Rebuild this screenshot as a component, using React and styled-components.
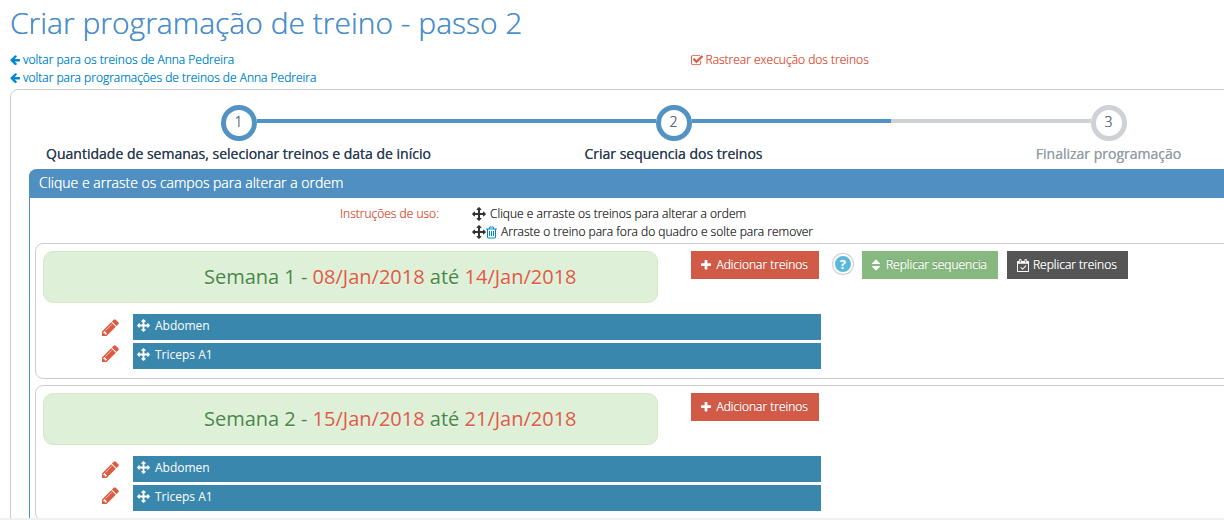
import styled, { createGlobalStyle } from "styled-components";

const GlobalStyle = createGlobalStyle`
  * {
    box-sizing: border-box;
  }
  body {
    margin: 0;
    background: #fff;
    color: #333;
    font-family: "Open Sans", "Liberation Sans", sans-serif;
    font-size: 12px;
    font-weight: 300;
    line-height: 18px;
    text-shadow: 0 0 0 currentColor;
  }
`

const Shell = styled.div`
  display: flex;
  flex-direction: column;
  height: 100vh;
`
const Page = styled.main`
  flex: 1;
  min-height: 0;
  overflow: hidden;
  padding: 0 10px;
`
const BottomStrip = styled.div`
  height: 2px;
  background: #f0f0f0;
`
const H1 = styled.h1`
  margin: 0;
  padding: 2px 0 7px;
  font-size: 30px;
  line-height: 42px;
  font-weight: 300;
  color: #4b8fcb;
  text-shadow: 0 0 0 currentColor;
`
const Columns = styled.div`
  display: grid;
  grid-template-columns: 1fr 1fr;
  column-gap: 33px;
`
// the form is wider than the window, its right end is cut
const Wide = styled.div`
  margin-right: -124px;
`
const LinkRow = styled(Columns)`
  padding: 0 0 2px;
  align-items: start;
`
const LinkList = styled.nav`
  display: flex;
  flex-direction: column;
  align-items: flex-start;
`
const Link = styled.a`
  display: inline-flex;
  align-items: center;
  gap: 3px;
  color: ${(props) => props.$danger ? "#dd5a43" : "#0088cc"};
  text-decoration: none;
  text-shadow: 0 0 0 currentColor;
`
const Frame = styled.section`
  border: 1px solid #ccc;
  border-radius: 8px;
  padding: 15px 0 20px;
`
const Steps = styled.ol`
  display: grid;
  grid-template-columns: repeat(3, 1fr);
  list-style: none;
  margin: 0;
  padding: 0 11px 6px 10px;
`
const Step = styled.li`
  display: flex;
  flex-direction: column;
  align-items: center;
  gap: 4px;
`
const Track = styled.div`
  display: grid;
  grid-template-columns: 1fr 36px 1fr;
  align-items: center;
  width: 100%;
`
const Line = styled.span`
  height: 4px;
  margin-bottom: 4px;
  background: ${(props) => props.$hidden ? "transparent" : props.$active ? "#5293c4" : "#ced1d6"};
`
const Circle = styled.span`
  height: 36px;
  border: 5px solid ${(props) => props.$active ? "#5293c4" : "#ced1d6"};
  border-radius: 50%;
  text-align: center;
  font-size: 14px;
  line-height: 24px;
  color: #546474;
`
const StepTitle = styled.span`
  font-size: 14px;
  font-weight: 400;
  color: ${(props) => props.$active ? "#2b3d53" : "#949ea7"};
  text-shadow: 0 0 0 currentColor;
`
const Panel = styled.div`
  margin: 0 18px;
  border: 1px solid #4f8fc1;
  border-top: 0;
  border-radius: 8px 8px 0 0;
`
const PanelTitle = styled.h2`
  margin: 0 -1px;
  padding: 0 10px 1px;
  border-radius: 8px 8px 0 0;
  background: #4f8fc1;
  color: #fff;
  font-size: 14px;
  line-height: 28px;
  font-weight: 300;
  text-shadow: 0 0 0 currentColor;
`
const Help = styled.div`
  display: grid;
  grid-template-columns: 409px 1fr;
  column-gap: 33px;
  padding: 7px 0 2px;
`
const HelpLabel = styled.span`
  color: #dd5a43;
  text-align: right;
  text-shadow: 0 0 0 currentColor;
`
const HelpLine = styled.div`
  display: flex;
  align-items: center;
`
const HelpText = styled.span`
  margin-left: 4px;
`
const Weeks = styled.div`
  display: flex;
  flex-direction: column;
  gap: 6px;
  padding: 0 5px;
`
const WeekBox = styled.section`
  border: 1px solid #ccc;
  border-radius: 8px;
  padding: 7px 7px 9px;
`
const WeekTitle = styled.h3`
  margin: 0;
  padding: 0 0 0 80px;
  border: 1px solid #d6e9c6;
  border-radius: 10px;
  background: #dff0d8;
  color: #468847;
  font-size: 20px;
  line-height: 50px;
  font-weight: 400;
  text-align: center;
  text-shadow: 0 1px 0 rgba(255, 255, 255, 0.5);
`
const DateText = styled.span`
  color: #dd5a43;
`
const Actions = styled.div`
  display: flex;
  align-items: flex-start;
`
const Button = styled.button`
  display: flex;
  align-items: center;
  gap: ${(props) => props.$gap || 4}px;
  height: 28px;
  margin: 0 9px 0 0;
  padding: 0 11px 0 10px;
  border: 0;
  background: ${(props) => props.$color};
  color: #fff;
  font: inherit;
  text-shadow: 0 0 0 #fff, 0 -1px 0 rgba(0, 0, 0, 0.25);
`
const HelpButton = styled.button`
  width: 20px;
  height: 20px;
  margin: 3px 9px 0 5px;
  padding: 0;
  border: 2px solid #fff;
  border-radius: 50%;
  background: #5bb8dc;
  box-shadow: 0 0 1px 1px #ccc;
  color: #fff;
  font: inherit;
  font-size: 13px;
  font-weight: 700;
  line-height: 16px;
`
const TaskArea = styled.div`
  display: flex;
  align-items: flex-start;
  margin-top: 11px;
`
const EditList = styled.div`
  display: flex;
  flex-direction: column;
  width: 90px;
`
const TaskList = styled.ul`
  display: flex;
  flex-direction: column;
  flex: 0 0 54.5%;
  gap: 3px;
  list-style: none;
  margin: 0;
  padding: 0;
`
const EditButton = styled.button`
  display: flex;
  justify-content: flex-end;
  align-items: center;
  height: 26px;
  padding: 0 14px 0 0;
  border: 0;
  background: none;
  color: #dd5a43;
`
const Task = styled.li`
  display: flex;
  gap: 5px;
  height: 26px;
  padding: 3px 4px;
  background: #3a87ad;
  color: #fff;
  font-weight: 400;
  text-shadow: none;
`
const Svg = styled.svg`
  display: block;
  flex: none;
  fill: currentColor;
  color: ${(props) => props.$color || "inherit"};
`
const TaskIcon = styled(Svg)`
  margin-top: 2px;
`

const icons = {
  arrowLeft: "M1664 896v128q0 53-32.5 90.5t-84.5 37.5h-704l293 294q38 36 38 90t-38 90l-75 76q-37 37-90 37-52 0-91-37l-651-652q-37-37-37-90 0-52 37-91l651-650q38-38 91-38 52 0 90 38l75 74q38 38 38 91t-38 91l-293 293h704q52 0 84.5 37.5t32.5 90.5z",
  check: "M1472 930v318q0 119-84.5 203.5t-203.5 84.5h-832q-119 0-203.5-84.5t-84.5-203.5v-832q0-119 84.5-203.5t203.5-84.5h832q63 0 117 25 15 7 18 23 3 17-9 29l-49 49q-10 10-23 10-3 0-9-2-23-6-45-6h-832q-66 0-113 47t-47 113v832q0 66 47 113t113 47h832q66 0 113-47t47-113v-254q0-13 9-22l64-64q10-10 23-10 6 0 12 3 20 8 20 29zm231-489l-814 814q-24 24-57 24t-57-24l-430-430q-24-24-24-57t24-57l110-110q24-24 57-24t57 24l263 263 647-647q24-24 57-24t57 24l110 110q24 24 24 57t-24 57z",
  move: "M1792 896q0 26-19 45l-256 256q-19 19-45 19t-45-19-19-45v-128h-384v384h128q26 0 45 19t19 45-19 45l-256 256q-19 19-45 19t-45-19l-256-256q-19-19-19-45t19-45 45-19h128v-384h-384v128q0 26-19 45t-45 19-45-19l-256-256q-19-19-19-45t19-45l256-256q19-19 45-19t45 19 19 45v128h384v-384h-128q-26 0-45-19t-19-45 19-45l256-256q19-19 45-19t45 19l256 256q19 19 19 45t-19 45-45 19h-128v384h384v-128q0-26 19-45t45-19 45 19l256 256q19 19 19 45z",
  trash: "M704 736v576q0 14-9 23t-23 9h-64q-14 0-23-9t-9-23v-576q0-14 9-23t23-9h64q14 0 23 9t9 23zm256 0v576q0 14-9 23t-23 9h-64q-14 0-23-9t-9-23v-576q0-14 9-23t23-9h64q14 0 23 9t9 23zm256 0v576q0 14-9 23t-23 9h-64q-14 0-23-9t-9-23v-576q0-14 9-23t23-9h64q14 0 23 9t9 23zm128 724v-948h-896v948q0 22 7 40.5t14.5 27 10.5 8.5h832q3 0 10.5-8.5t14.5-27 7-40.5zm-672-1076h448l-48-117q-7-9-17-11h-317q-10 2-17 11zm928 32v64q0 14-9 23t-23 9h-96v948q0 83-47 143.5t-113 60.5h-832q-66 0-113-58.5t-47-141.5v-952h-96q-14 0-23-9t-9-23v-64q0-14 9-23t23-9h309l70-167q15-37 54-63t79-26h320q40 0 79 26t54 63l70 167h309q14 0 23 9t9 23z",
  plus: "M1600 736v192q0 40-28 68t-68 28h-416v416q0 40-28 68t-68 28h-192q-40 0-68-28t-28-68v-416h-416q-40 0-68-28t-28-68v-192q0-40 28-68t68-28h416v-416q0-40 28-68t68-28h192q40 0 68 28t28 68v416h416q40 0 68 28t28 68z",
  sort: "M1408 1088q0 26-19 45l-448 448q-19 19-45 19t-45-19l-448-448q-19-19-19-45t19-45 45-19h896q26 0 45 19t19 45zm0-384q0 26-19 45t-45 19h-896q-26 0-45-19t-19-45 19-45l448-448q19-19 45-19t45 19l448 448q19 19 19 45z",
  calendar: "M1303 964l-512 512q-10 9-23 9t-23-9l-288-288q-9-10-9-23t9-22l46-46q9-9 22-9t23 9l220 220 444-444q10-9 23-9t22 9l46 46q9 9 9 22t-9 23zm-1175 700h1408v-1024h-1408v1024zm384-1216v-288q0-14-9-23t-23-9h-64q-14 0-23 9t-9 23v288q0 14 9 23t23 9h64q14 0 23-9t9-23zm768 0v-288q0-14-9-23t-23-9h-64q-14 0-23 9t-9 23v288q0 14 9 23t23 9h64q14 0 23-9t9-23zm384-64v1280q0 52-38 90t-90 38h-1408q-52 0-90-38t-38-90v-1280q0-52 38-90t90-38h128v-96q0-66 47-113t113-47h64q66 0 113 47t47 113v96h384v-96q0-66 47-113t113-47h64q66 0 113 47t47 113v96h128q52 0 90 38t38 90z",
  pencil: "M491 1536l91-91-235-235-91 91v107h128v128h107zm523-928q0-22-22-22-10 0-17 7l-542 542q-7 7-7 17 0 22 22 22 10 0 17-7l542-542q7-7 7-17zm-54-192l416 416-832 832h-416v-416zm683 96q0 53-37 90l-166 166-416-416 166-165q36-38 90-38 53 0 91 38l235 234q37 39 37 91z",
}

const boxes = {
  arrowLeft: "128 160 1536 1536",
  check: "64 0 1664 1664",
  trash: "192 64 1408 1664",
  plus: "192 192 1408 1408",
  sort: "384 128 1024 1536",
  calendar: "0 0 1664 1792",
  pencil: "128 128 1536 1536",
}

const Icon = ({ name, width, height, color, as: Tag = Svg }) => (
  <Tag width={width} height={height || width} viewBox={boxes[name] || "0 0 1792 1792"} $color={color} aria-hidden="true">
    <path d={icons[name]} />
  </Tag>
)

const steps = [
  { title: "Quantidade de semanas, selecionar treinos e data de início", left: false, right: true, active: true },
  { title: "Criar sequencia dos treinos", left: true, right: true, active: true },
  { title: "Finalizar programação", left: true, right: false, active: false },
]

const weeks = [
  { start: "08/Jan/2018", end: "14/Jan/2018", tasks: ["Abdomen", "Triceps A1"] },
  { start: "15/Jan/2018", end: "21/Jan/2018", tasks: ["Abdomen", "Triceps A1"] },
]

const Week = ({ week, number }) => (
  <WeekBox>
    <Columns>
      <WeekTitle>
        Semana {number} - <DateText>{week.start}</DateText> até <DateText>{week.end}</DateText>
      </WeekTitle>
      <Actions>
        <Button type="button" $color="#d15b47" $gap={6}>
          <Icon name="plus" width={10} />
          Adicionar treinos
        </Button>
        {number === 1 && (
          <>
            <HelpButton type="button">?</HelpButton>
            <Button type="button" $color="#87b87f" $gap={6}>
              <Icon name="sort" width={8} height={12} />
              Replicar sequencia
            </Button>
            <Button type="button" $color="#555555">
              <Icon name="calendar" width={12} height={13} />
              Replicar treinos
            </Button>
          </>
        )}
      </Actions>
    </Columns>
    <TaskArea>
      <EditList>
        {week.tasks.map((task) => (
          <EditButton key={task} type="button" aria-label={"Editar " + task}>
            <Icon name="pencil" width={17} />
          </EditButton>
        ))}
      </EditList>
      <TaskList>
        {week.tasks.map((task) => (
          <Task key={task}>
            <Icon name="move" width={13} as={TaskIcon} />
            {task}
          </Task>
        ))}
      </TaskList>
    </TaskArea>
  </WeekBox>
)

const App = () => {
  return (
    <Shell>
      <GlobalStyle />
      <Page>
        <H1>Criar programação de treino - passo 2</H1>
        <Wide>
          <LinkRow>
            <LinkList>
              <Link href="#treinos"><Icon name="arrowLeft" width={10} />voltar para os treinos de Anna Pedreira</Link>
              <Link href="#programacoes"><Icon name="arrowLeft" width={10} />voltar para programações de treinos de Anna Pedreira</Link>
            </LinkList>
            <LinkList>
              <Link href="#rastrear" $danger><Icon name="check" width={12} />Rastrear execução dos treinos</Link>
            </LinkList>
          </LinkRow>
          <Frame>
            <Steps>
              {steps.map((step, key) => (
                <Step key={key}>
                  <Track>
                    <Line $active={step.active} $hidden={!step.left} />
                    <Circle $active={step.active}>{key + 1}</Circle>
                    <Line $active={step.active} $hidden={!step.right} />
                  </Track>
                  <StepTitle $active={step.active}>{step.title}</StepTitle>
                </Step>
              ))}
            </Steps>
            <Panel>
              <PanelTitle>Clique e arraste os campos para alterar a ordem</PanelTitle>
              <Help>
                <HelpLabel>Instruções de uso:</HelpLabel>
                <div>
                  <HelpLine>
                    <Icon name="move" width={14} />
                    <HelpText>Clique e arraste os treinos para alterar a ordem</HelpText>
                  </HelpLine>
                  <HelpLine>
                    <Icon name="move" width={14} />
                    <Icon name="trash" width={11} height={13} color="#0088cc" />
                    <HelpText>Arraste o treino para fora do quadro e solte para remover</HelpText>
                  </HelpLine>
                </div>
              </Help>
              <Weeks>
                {weeks.map((week, key) => <Week key={key} week={week} number={key + 1} />)}
              </Weeks>
            </Panel>
          </Frame>
        </Wide>
      </Page>
      <BottomStrip />
    </Shell>
  );
}

export default App;
